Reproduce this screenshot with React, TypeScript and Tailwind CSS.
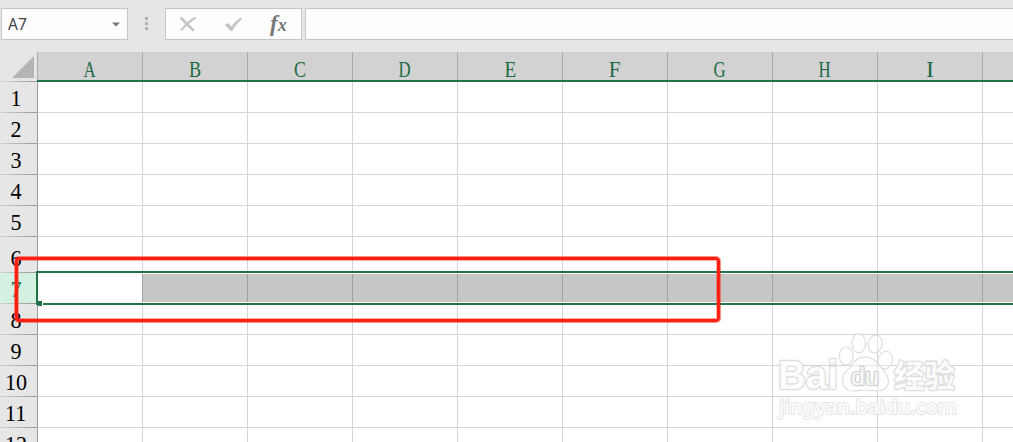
import { clsx } from "clsx";

const columns = [
    { name: "A", scale: "scale-x-[0.7]" },
    { name: "B", scale: "scale-x-[0.76]" },
    { name: "C", scale: "scale-x-[0.74]" },
    { name: "D", scale: "scale-x-[0.7]" },
    { name: "E", scale: "scale-x-[0.8]" },
    { name: "F", scale: "scale-x-[0.88]" },
    { name: "G", scale: "scale-x-[0.7]" },
    { name: "H", scale: "scale-x-[0.7]" },
    { name: "I", scale: "scale-x-100" },
    { name: "", scale: "scale-x-100" },
];
const rows = [1, 2, 3, 4, 5, 6, 7, 8, 9, 10, 11, 12];

function FormulaBar() {
    return (
        <div className="flex h-[52px] shrink-0 pt-2 pl-px">
            <div className="flex h-8 w-[127px] items-center justify-between border border-[#c6c6c6] bg-[#fdfdfd] pr-[7px] pl-1.5">
                <span className="pt-0.5 font-['Noto_Sans',sans-serif] text-[15.5px] leading-none text-[#444]">A7</span>
                <svg width="8" height="5" viewBox="0 0 8 5" fill="#777">
                    <path d="M0 0.5H8L4 4.5Z" />
                </svg>
            </div>
            <div className="mt-[9px] ml-[17px] flex w-[3px] flex-col gap-[2px]">
                <i className="h-[3px] bg-[#b0b0b0]" />
                <i className="h-[3px] bg-[#b0b0b0]" />
                <i className="h-[3px] bg-[#b0b0b0]" />
            </div>
            <div className="ml-[17px] flex h-8 w-[137px] items-center border border-[#c6c6c6] bg-[#fdfdfd] pl-[13px]">
                <svg width="18" height="16" viewBox="0 0 18 16" fill="none" stroke="#c3c3c3" strokeLinecap="round">
                    <path d="M2.5 2.5L14 14" strokeWidth="2.6" />
                    <path d="M16 2C10 5 6 10 2.5 14" strokeWidth="2" />
                </svg>
                <svg className="ml-7" width="18" height="16" viewBox="0 0 18 16" fill="#c3c3c3">
                    <path d="M0 9L3 7L6.5 10.5C9.5 6.5 12.5 3.5 16 1.5L17 3C13 6 10 10 7.2 15H5.7Z" />
                </svg>
                <span className="ml-[27px] pb-px font-['Liberation_Serif',serif] text-[23px] leading-none font-bold text-[#777] italic">
                    f<span className="text-[18px]">x</span>
                </span>
            </div>
            <div className="ml-[3px] h-8 flex-1 border border-r-0 border-[#c6c6c6] bg-[#fdfdfd]" />
        </div>
    );
}

function ColumnHeaders() {
    return (
        <div className="flex h-[30px] shrink-0">
            <div className="flex w-[37px] shrink-0 flex-col">
                <svg className="mt-1 ml-3 shrink-0" width="22" height="22" viewBox="0 0 22 22" fill="#b4b4b4">
                    <path d="M22 0V22H0Z" />
                </svg>
                <div className="mt-[3px] h-px bg-linear-to-r from-[#d4d4d4] to-[#999]" />
            </div>
            {columns.map((col, i) => (
                <div
                    key={i}
                    className={clsx(
                        "flex h-[30px] w-[105px] shrink-0 justify-center border-b-2 border-[#217346] bg-[#d2d2d2] pt-[5px] pl-px",
                        "bg-[linear-gradient(90deg,#ababab_1px,transparent_1px)]"
                    )}
                >
                    <span
                        className={clsx(
                            "block font-['Liberation_Serif',serif] text-[24px] leading-6 text-[#1c6b45]",
                            col.scale
                        )}
                    >
                        {col.name}
                    </span>
                </div>
            ))}
        </div>
    );
}

function Row({ n }: { n: number }) {
    const selected = n === 7;
    return (
        <div className={clsx("flex shrink-0", n === 6 ? "h-9" : "h-[31px]")}>
            <div className={clsx("flex w-[37px] shrink-0 flex-col", selected && "bg-[#d3f0e0]")}>
                <div
                    className={clsx(
                        "flex flex-1 items-end justify-center pr-[5px] font-['Liberation_Serif',serif] text-[24px] leading-7",
                        selected ? "text-[#217346]" : "text-black"
                    )}
                >
                    <span className="block scale-x-92">{n}</span>
                </div>
                <div className="h-px bg-linear-to-r from-[#d0d0d0] to-[#999]" />
            </div>
            {columns.map((_, i) => (
                <div
                    key={i}
                    className={clsx(
                        "w-[105px] shrink-0 border-b border-l border-b-[#d4d4d4] bg-white",
                        i === 0 ? "border-l-[#999]" : "border-l-[#d4d4d4]"
                    )}
                />
            ))}
        </div>
    );
}

// outline drawn over the whole of row 7
function Selection() {
    return (
        <div className="absolute top-[271px] left-9 flex h-[34px] w-[977px] border-2 border-r-0 border-[#217346] bg-white py-px pl-[104px]">
            {columns.slice(1).map((_, i) => (
                <div key={i} className="w-[105px] shrink-0 border-l border-[#a2a2a2] bg-[#c6c6c6]" />
            ))}
            <div className="absolute -bottom-[3px] left-0 h-[6px] w-[5px] border-t border-r border-white bg-[#217346]" />
        </div>
    );
}

function Watermark() {
    return (
        <svg
            className="absolute top-[325px] left-[765px]"
            width="210"
            height="110"
            viewBox="0 0 210 110"
            fill="#fff"
            fillOpacity="0.4"
            stroke="#dedede"
            strokeWidth="1.2"
        >
            <ellipse cx="81.2" cy="31" rx="7" ry="9" />
            <ellipse cx="93.8" cy="18.3" rx="6.8" ry="9.5" />
            <ellipse cx="110" cy="19" rx="7" ry="9" transform="rotate(12 110 19)" />
            <ellipse cx="120.3" cy="35" rx="7.2" ry="8.8" transform="rotate(12 120 35)" />
            <path d="M100 32C94 32 90 35 87 40C84 45 78 47 77.5 55C77.5 62 82 66 88 66C93 66 96 65 100 65C105 65 108 66 113 66C119 66 123.5 62 123.5 56C123 48 117 45 113 39C110 35 106 32 100 32Z" />
            <g
                fontFamily="'Liberation Sans', Arial, sans-serif"
                fontWeight="bold"
                strokeLinejoin="round"
                strokeWidth="2.6"
                fillOpacity="0.9"
                paintOrder="stroke"
            >
                <text x="13" y="64" fontSize="41" textLength="60" lengthAdjust="spacingAndGlyphs">
                    Bai
                </text>
                <text x="86" y="60" fontSize="23" fontWeight="normal" textLength="28" lengthAdjust="spacingAndGlyphs" stroke="#d2d2d2">
                    du
                </text>
                <text x="129" y="62" fontSize="31" fontFamily="'Noto Sans CJK SC', sans-serif" textLength="61" lengthAdjust="spacingAndGlyphs">
                    经验
                </text>
            </g>
            <text
                x="14"
                y="89"
                fontSize="20.5"
                fontFamily="'Noto Sans', sans-serif"
                fontWeight="500"
                stroke="#e6e6e6"
                strokeWidth="2"
                strokeLinejoin="round"
                fillOpacity="0.9"
                paintOrder="stroke"
                textLength="178"
                lengthAdjust="spacingAndGlyphs"
            >
                jingyan.baidu.com
            </text>
        </svg>
    );
}

export default function App() {
    return (
        <div className="relative flex h-[442px] w-[1013px] flex-col overflow-hidden bg-[#e6e6e6]">
            <FormulaBar />
            <ColumnHeaders />
            {rows.map((n) => (
                <Row key={n} n={n} />
            ))}
            <Selection />
            <div className="absolute top-[257px] left-[15px] h-[65px] w-[705px] rounded-[4px] border-3 border-[#ff2214] shadow-[0_0_0_1px_#ff221480,inset_0_0_0_1px_#ff221460]" />
            <Watermark />
        </div>
    );
}
